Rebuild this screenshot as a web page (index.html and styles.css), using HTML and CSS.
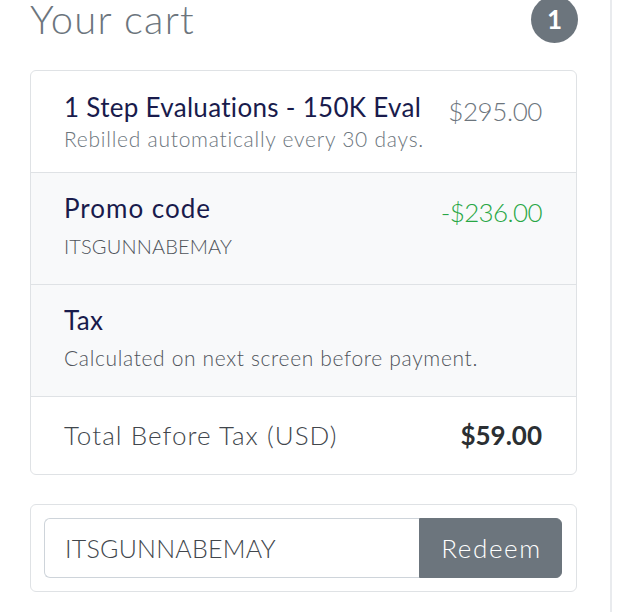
FILE: index.html
```html
<!DOCTYPE html>
<html lang="en">
<head>
<meta charset="utf-8">
<title>Your cart</title>
<link rel="stylesheet" href="styles.css">
</head>
<body>
<div class="layout">
  <main class="main">
    <header class="cart-head">
      <h4 class="cart-title">Your cart</h4>
      <span class="badge">1</span>
    </header>

    <ul class="cart-list">
      <li class="item item-first">
        <div class="item-text">
          <h6 class="item-name">1 Step Evaluations - 150K Eval</h6>
          <small class="item-note">Rebilled automatically every 30 days.</small>
        </div>
        <span class="item-price muted">$295.00</span>
      </li>
      <li class="item item-shaded">
        <div class="item-text">
          <h6 class="item-name item-name-wide">Promo code</h6>
          <small class="item-code">ITSGUNNABEMAY</small>
        </div>
        <span class="item-price success price-narrow">-$236.00</span>
      </li>
      <li class="item item-shaded">
        <div class="item-text">
          <h6 class="item-name">Tax</h6>
          <small class="item-detail">Calculated on next screen before payment.</small>
        </div>
      </li>
      <li class="item item-total">
        <span class="total-label">Total Before Tax (USD)</span>
        <strong class="total-value">$59.00</strong>
      </li>
    </ul>

    <form class="promo-card">
      <div class="input-group">
        <input class="promo-input" type="text" value="ITSGUNNABEMAY" aria-label="Promo code">
        <button class="promo-btn" type="button">Redeem</button>
      </div>
    </form>
  </main>
  <aside class="side"></aside>
</div>
</body>
</html>
```

FILE: styles.css
```css
* { box-sizing: border-box; }

html, body {
  margin: 0;
  padding: 0;
  background: #ffffff;
}

body {
  font-family: "Lato", "Liberation Sans", sans-serif;
  color: #212529;
  height: 612px;
  overflow: hidden;
}

.layout {
  display: flex;
  height: 612px;
}

.main {
  width: 612px;
  padding: 0 33px 0 30px;
  border-right: 2px solid #e9ebee;
}

.side {
  flex: 1;
}

.cart-head {
  display: flex;
  align-items: center;
  justify-content: space-between;
  height: 38px;
  margin-bottom: 32px;
}

.cart-title {
  margin: 0;
  font-size: 40px;
  font-weight: 300;
  line-height: 40px;
  letter-spacing: 1.2px;
  color: #6c757d;
}

.badge {
  width: 47px;
  height: 47px;
  margin-right: -1px;
  border-radius: 50%;
  background: #6c757d;
  color: #ffffff;
  font-weight: 700;
  font-size: 26px;
  display: flex;
  align-items: center;
  justify-content: center;
}

.cart-list {
  list-style: none;
  margin: 0;
  padding: 0;
  border: 1px solid #dfe2e5;
  border-radius: 6px;
  overflow: hidden;
}

.item {
  display: flex;
  justify-content: space-between;
  align-items: flex-start;
  padding: 20px 34px 17px 33px;
}

.item + .item {
  border-top: 1px solid #dfe2e5;
}

.item-shaded {
  background: #f8f9fa;
  padding: 19px 34px 24px 33px;
}

.item-text {
  display: flex;
  flex-direction: column;
}

.item-name {
  margin: 0;
  font-size: 26px;
  font-weight: 400;
  line-height: 32px;
  letter-spacing: 0.3px;
  color: #191b4c;
}

.item-name-wide {
  letter-spacing: 1px;
}

.item-note {
  font-size: 21px;
  font-weight: 300;
  line-height: 32px;
  letter-spacing: 0.75px;
  color: #6c757d;
}

.item-code {
  margin-top: 8px;
  font-size: 20px;
  font-weight: 300;
  line-height: 28px;
  letter-spacing: 0.15px;
  color: #4f545a;
}

.item-detail {
  margin-top: 8px;
  font-size: 21px;
  font-weight: 300;
  line-height: 28px;
  letter-spacing: 0.65px;
  color: #4f545a;
}

.item-price {
  font-size: 26px;
  font-weight: 300;
  line-height: 32px;
  padding-top: 4px;
  letter-spacing: -0.4px;
}

.price-narrow {
  letter-spacing: -0.6px;
}

.muted { color: #6c757d; }
.success { color: #28a745; }

.item-total {
  align-items: baseline;
  padding: 18px 34px 19px 33px;
}

.total-label {
  font-size: 26px;
  font-weight: 300;
  line-height: 40px;
  letter-spacing: 1.05px;
  color: #41464c;
}

.total-value {
  font-size: 26px;
  line-height: 40px;
  font-weight: 700;
  color: #2b2f33;
}

.promo-card {
  margin: 29px 0 0;
  padding: 13px 14px 13px 13px;
  border: 1px solid #dfe2e5;
  border-radius: 6px;
}

.input-group {
  display: flex;
  height: 60px;
}

.promo-input {
  flex: 1;
  min-width: 0;
  height: 60px;
  margin: 0;
  padding: 0 20px;
  font-family: inherit;
  font-size: 25px;
  font-weight: 300;
  letter-spacing: 0.25px;
  color: #41464c;
  border: 1px solid #ced4da;
  border-right: none;
  border-radius: 6px 0 0 6px;
  background: #ffffff;
  outline: none;
}

.promo-btn {
  width: 143px;
  height: 60px;
  margin: 0;
  padding: 0 0 0 2px;
  font-family: inherit;
  font-size: 26px;
  font-weight: 300;
  letter-spacing: 1.6px;
  color: #ffffff;
  background: #6c757d;
  border: 1px solid #6c757d;
  border-radius: 0 6px 6px 0;
}
```
